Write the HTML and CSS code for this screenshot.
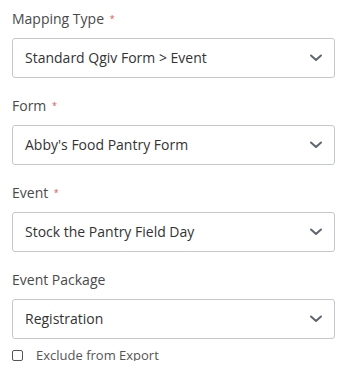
FILE: index.html
```html
<!DOCTYPE html>
<html>
<head>
<meta charset="utf-8">
<link rel="stylesheet" href="styles.css">
</head>
<body>
<form class="mapping">
  <div class="field">
    <label class="label">Mapping Type <span class="req">*</span></label>
    <div class="select"><span class="value">Standard Qgiv Form &gt; Event</span><svg class="chev" width="12" height="8" viewBox="0 0 12 8"><path d="M1 1.5 L6 6 L11 1.5" fill="none" stroke="#5f6670" stroke-width="2" stroke-linecap="round" stroke-linejoin="round"/></svg></div>
  </div>
  <div class="field">
    <label class="label">Form <span class="req">*</span></label>
    <div class="select"><span class="value">Abby's Food Pantry Form</span><svg class="chev" width="12" height="8" viewBox="0 0 12 8"><path d="M1 1.5 L6 6 L11 1.5" fill="none" stroke="#5f6670" stroke-width="2" stroke-linecap="round" stroke-linejoin="round"/></svg></div>
  </div>
  <div class="field">
    <label class="label">Event <span class="req">*</span></label>
    <div class="select"><span class="value">Stock the Pantry Field Day</span><svg class="chev" width="12" height="8" viewBox="0 0 12 8"><path d="M1 1.5 L6 6 L11 1.5" fill="none" stroke="#5f6670" stroke-width="2" stroke-linecap="round" stroke-linejoin="round"/></svg></div>
  </div>
  <div class="field last">
    <label class="label">Event Package</label>
    <div class="select"><span class="value">Registration</span><svg class="chev" width="12" height="8" viewBox="0 0 12 8"><path d="M1 1.5 L6 6 L11 1.5" fill="none" stroke="#5f6670" stroke-width="2" stroke-linecap="round" stroke-linejoin="round"/></svg></div>
  </div>
  <label class="check"><span class="box"></span><span class="check-text">Exclude from Export</span></label>
</form>
</body>
</html>
```
FILE: styles.css
```css
html, body {
  margin: 0;
  padding: 0;
  background: #ffffff;
}
body {
  font-family: "Open Sans", "Liberation Sans", sans-serif;
}
.mapping {
  padding: 10px 15px 0 12px;
  width: 323px;
}
.field {
  margin-bottom: 19px;
}
.field.last {
  margin-bottom: 10px;
}
.label {
  display: block;
  font-size: 14px;
  line-height: 18px;
  color: #4a4a4a;
  margin-bottom: 10px;
}
.req {
  color: #e0524f;
  font-size: 9px;
  line-height: 10px;
  vertical-align: 2px;
  margin-left: 2px;
}
.select {
  box-sizing: border-box;
  height: 40px;
  border: 1px solid #c4c8cc;
  border-radius: 3px;
  display: flex;
  align-items: center;
  justify-content: space-between;
  padding: 0 12px 0 12px;
}
.value {
  font-size: 14px;
  line-height: 18px;
  color: #333333;
}
.chev {
  display: block;
  margin-right: 0;
}
.check {
  display: flex;
  align-items: center;
  height: 12px;
  margin-top: 1px;
}
.box {
  box-sizing: border-box;
  width: 11px;
  height: 11px;
  border: 1px solid #555;
  border-radius: 2px;
  margin-right: 13px;
}
.check-text {
  font-size: 13px;
  line-height: 16px;
  color: #555555;
}
```
